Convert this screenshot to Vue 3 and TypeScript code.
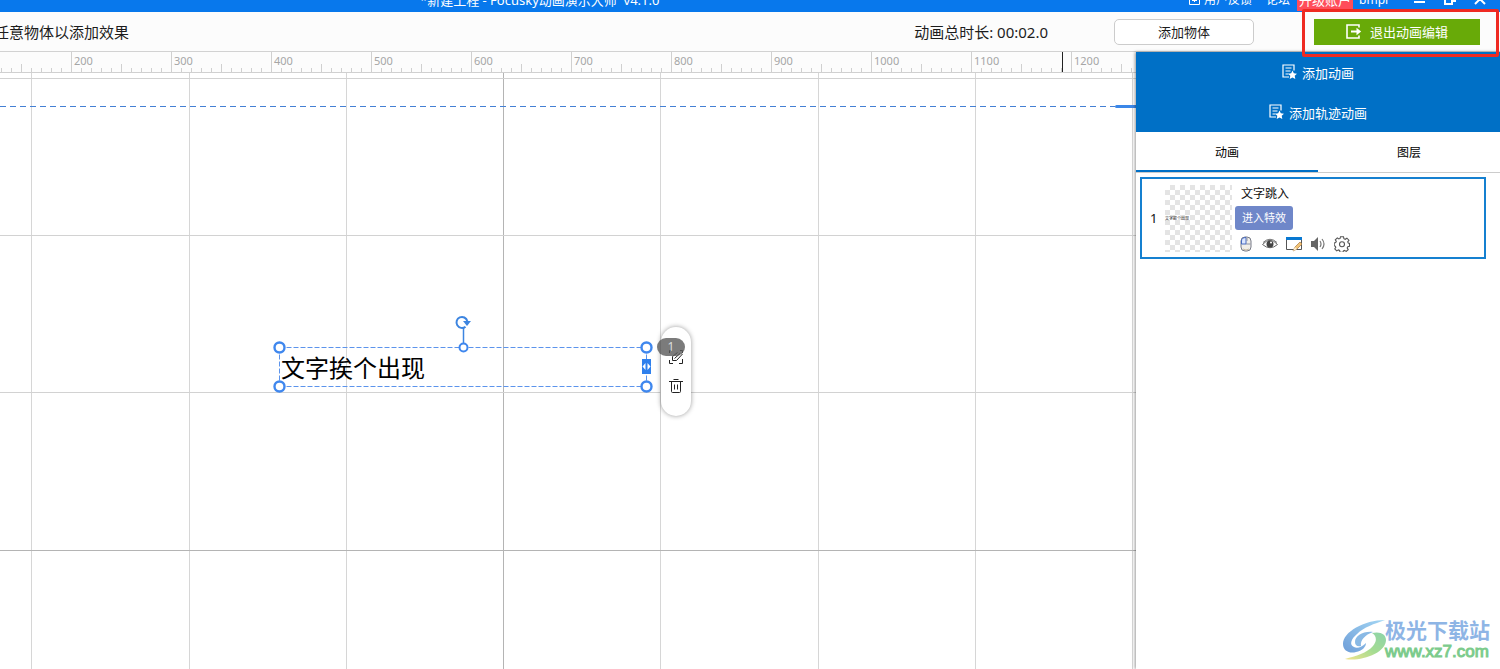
<script setup lang="ts">
import { computed, onBeforeUnmount, onMounted, ref } from 'vue'

const PANEL_WIDTH = 364
const windowWidth = ref(window.innerWidth)
const updateWidth = () => { windowWidth.value = window.innerWidth }
onMounted(() => window.addEventListener('resize', updateWidth))
onBeforeUnmount(() => window.removeEventListener('resize', updateWidth))

const rulerMarks = computed<number[]>(() => {
  const count = Math.floor((windowWidth.value - PANEL_WIDTH - 71) / 100) + 1
  return Array.from({ length: Math.max(count, 0) }, (_, i) => (i + 2) * 100)
})
const columns: number[] = Array.from({ length: 24 }, (_, i) => Math.round(31.4 + i * 157.25))
const rows: number[] = Array.from({ length: 14 }, (_, i) => Math.round(4.9 + i * 157.25))
const activeTab = ref<'animation' | 'layer'>('animation')
</script>

<template>
  <div class="app">
    <header class="titlebar">
      <div class="titlebar-row">
        <span class="title">*新建工程 - Focusky动画演示大师&nbsp; v4.1.0</span>
        <nav class="account">
          <a href="#" class="feedback">
            <svg width="11" height="12" viewBox="0 0 11 12" fill="none" stroke="#fff"><path d="M.5 .5h10v10H.5zM3 6.500h5M5.500 3v5" /></svg>
            用户反馈
          </a>
          <a href="#">论坛</a>
          <a href="#" class="upgrade">升级账户</a>
          <a href="#">bmpr</a>
        </nav>
        <div class="window-buttons">
          <button aria-label="最小化"><svg width="12" height="12" viewBox="0 0 12 12"><path d="M0 7h11v2H0z" fill="#fff" /></svg></button>
          <button aria-label="还原"><svg width="12" height="12" viewBox="0 0 12 12" fill="none" stroke="#fff" stroke-width="2"><path d="M1 4h7v6H1zM4 4V1h7v6H8" /></svg></button>
          <button aria-label="关闭"><svg width="12" height="12" viewBox="0 0 12 12" fill="none" stroke="#fff" stroke-width="2"><path d="M1 0l10 10M11 0L1 10" /></svg></button>
        </div>
      </div>
    </header>

    <div class="toolbar">
      <span class="hint">任意物体以添加效果</span>
      <span class="duration">动画总时长: 00:02.0</span>
      <button class="add-object">添加物体</button>
      <button class="exit">
        <svg width="16" height="15" viewBox="0 0 16 15" fill="none" stroke="#fff" stroke-width="1.600"><path d="M13 3.500V1H1v13h12v-2.500" /><path d="M5 7.500h7" stroke-width="2" /><path d="M10.500 3.800l4.700 3.700-4.700 3.700z" fill="#fff" stroke="none" /></svg>
        退出动画编辑
      </button>
      <div class="callout"></div>
    </div>

    <main class="main">
      <section class="workspace">
        <div class="ruler">
          <div v-for="mark in rulerMarks" :key="mark" class="ruler-cell">{{ mark }}</div>
          <i class="ruler-cursor"></i>
        </div>
        <div class="surface">
          <svg class="grid" width="100%" height="100%">
            <rect v-for="(x, i) in columns" :key="'c' + x" :x="x" y="0" width="1" height="100%" :fill="i === 3 ? '#b4b4b4' : '#d6d6d6'" />
            <rect v-for="(y, i) in rows" :key="'r' + y" x="0" :y="y" width="100%" height="1" :fill="i === 3 ? '#b4b4b4' : '#d2d2d2'" />
          </svg>
          <div class="frame-edge"><i></i></div>

          <div class="text-object">
            文字挨个出现
            <svg class="handles" width="390" height="82" viewBox="0 0 390 82" fill="none">
              <g stroke="#5c94ec" stroke-dasharray="5 2">
                <path d="M11.500 35.500H378.500M11.500 74.500H378.500M11.500 35.500V74.500M378.500 35.500V74.500" />
              </g>
              <path d="M195.500 16v16" stroke="#3d85e0" stroke-width="1.500" />
              <g fill="#fff" stroke="#3f87ee" stroke-width="2.400">
                <circle cx="11.500" cy="35.500" r="5" /><circle cx="378.500" cy="35.500" r="5" />
                <circle cx="11.500" cy="74.500" r="5" /><circle cx="378.500" cy="74.500" r="5" />
                <circle cx="195.500" cy="35.500" r="4" stroke-width="2" />
              </g>
              <path d="M197.500 14.700A5.500 5.500 0 1 1 199.300 9" stroke="#3d85e0" stroke-width="2" />
              <path d="M195 9h8l-4 5z" fill="#3d85e0" />
              <path d="M374 47h9v15h-9z" fill="#2f80ed" />
              <path d="M377.500 51v7l-3-3.500zM379.500 51v7l3-3.500z" fill="#fff" />
            </svg>
          </div>

          <div class="float-bar">
            <button aria-label="编辑">
              <svg width="16" height="16" viewBox="0 0 16 16" fill="none" stroke="#222"><path d="M1.500 4V1.500H4M12 1.500h2.500V4M1.500 11v3.500H5M11 14.500h3.500V10" /><path d="M4.500 11.500v-4l5-4M4.500 11.500h4l6-6.500M6.500 9.500l5.500-5" /></svg>
            </button>
            <button aria-label="删除">
              <svg width="14" height="16" viewBox="0 0 14 16" fill="none" stroke="#222"><path d="M0 3.500h14M4.500 1.500h5M2.500 3.500v10q0 1 1 1h7q1 0 1-1V3.500M5.500 6.500v5M8.500 6.500v5" /></svg>
            </button>
          </div>
          <span class="order-badge">1</span>
        </div>
      </section>

      <aside class="panel">
        <div class="panel-actions">
          <button v-for="label in ['添加动画', '添加轨迹动画']" :key="label">
            <svg width="15" height="16" viewBox="0 0 15 16" fill="none" stroke="#fff" stroke-width="1.200"><path d="M12 6.500V1H1v12h6M3.500 4h6M3.500 7h5M3.500 10h3" /><path d="M10.500 6.500l1.300 2.800 3.200.4-2.300 2.100.6 3.200-2.800-1.600L7.700 15l.6-3.200L6 9.700l3.200-.4z" fill="#fff" stroke="none" /></svg>
            {{ label }}
          </button>
        </div>
        <div class="tabs" role="tablist">
          <button role="tab" :class="{ active: activeTab === 'animation' }" @click="activeTab = 'animation'">动画</button>
          <button role="tab" :class="{ active: activeTab === 'layer' }" @click="activeTab = 'layer'">图层</button>
        </div>
        <article class="card">
          <span class="number">1</span>
          <div class="thumb">文字挨个出现</div>
          <div class="details">
            <span class="name">文字跳入</span>
            <button class="effect">进入特效</button>
            <div class="tools">
              <button aria-label="鼠标触发">
                <svg width="16" height="16" viewBox="0 0 16 16"><rect x="3" y="1" width="10" height="14" rx="4" fill="#f1eee8" stroke="#777b88" /><path d="M8 1.500V8H3.500V5Q3.500 1.500 8 1.500z" fill="#dce7ff" stroke="#4669bf" /><path d="M8 8h4.500M9 2v3" stroke="#8c92a5" /><path d="M5 13q3 2 6 0" fill="none" stroke="#c8bca5" /></svg>
              </button>
              <button aria-label="预览">
                <svg width="16" height="16" viewBox="0 0 16 16" fill="none"><path d="M.5 8.500Q8 0 15.500 8.500 8 15 .5 8.500z" stroke="#666" /><path d="M1 6.500Q8 0 15 6.500" stroke="#777" /><circle cx="8" cy="8" r="3.500" fill="#444" /><circle cx="9" cy="6.500" r="1" fill="#fff" /></svg>
              </button>
              <button aria-label="编辑">
                <svg width="16" height="16" viewBox="0 0 16 16"><path d="M.5 1.500h15v12H.5z" fill="#fff" stroke="#555" /><path d="M0 1h16v3H0z" fill="#0878d1" /><path d="M7 15l2-4 5-5 2 2-5 5z" fill="#f3c475" stroke="#a77843" stroke-width=".7" /><path d="M7 15l2-4 2 2z" fill="#fff0d0" /></svg>
              </button>
              <button aria-label="声音">
                <svg width="16" height="16" viewBox="0 0 16 16"><path d="M1 5h3l4-4v14l-4-4H1z" fill="#666" /><path d="M10 5q2 3 0 6M12 3q4 5 0 10" fill="none" stroke="#777" stroke-width="1.200" /></svg>
              </button>
              <button aria-label="设置">
                <svg width="16" height="16" viewBox="0 0 16 16" fill="none" stroke="#555" stroke-width="1.100"><path d="M6.500 .7h3l.4 2 1.300.6 1.700-1.100 2 2-1.200 1.700.6 1.200 1.200.3v2.800l-1.700.4-.6 1.300 1 1.700-2 1.800-1.700-1-1.100.5-.4 1.300h-3l-.4-1.800-1.200-.5-1.700 1-1.900-2 1-1.600-.6-1.200-1-.3V7l1.500-.4.6-1.200-1-1.600 2-1.900 1.500 1 1.300-.5z" /><circle cx="8" cy="8.300" r="2.500" /></svg>
              </button>
            </div>
          </div>
        </article>
      </aside>
    </main>

    <div class="watermark">
      <svg width="46" height="42" viewBox="0 0 46 42">
        <defs>
          <linearGradient id="swirl-blue" x1="0" y1="1" x2="1" y2="0"><stop stop-color="#4b86cf" /><stop offset="1" stop-color="#8dcdf2" /></linearGradient>
          <linearGradient id="swirl-green" x1="0" y1="1" x2="1" y2="0"><stop stop-color="#f0dd70" /><stop offset=".5" stop-color="#8fd477" /><stop offset="1" stop-color="#70c996" /></linearGradient>
        </defs>
        <path d="M3 40C19 43 44 34 44 21c0-6-6-9-14-7 5 3 5 8 1 13C25 34 14 37 3 40z" fill="url(#swirl-green)" />
        <path d="M43 1C22 1 1 13 1 25c0 7 7 10 13 8 6-1 10-5 10-9-4 4-9 6-12 4-5-2-3-8 3-13C22 8 32 5 43 1z" fill="url(#swirl-blue)" />
        <path d="M31 13c-10-1-18 4-18 10 0 3 2 5 6 4-1-6 4-11 12-14z" fill="#6ca8df" />
      </svg>
      <div class="watermark-text"><b>极光下载站</b><span>www.xz7.com</span></div>
    </div>
  </div>
</template>

<style>
html, body { margin: 0; }
</style>

<style scoped>
.app {
  position: relative;
  display: flex;
  flex-direction: column;
  min-height: 100vh;
  overflow: hidden;
  background: #fff;
  color: #1c1c1c;
  font-family: "Noto Sans", "Noto Sans CJK SC", sans-serif;
  font-size: 13px;
}
* { box-sizing: border-box; }
button { margin: 0; padding: 0; border: 0; background: none; color: inherit; font: inherit; cursor: pointer; }
a { color: inherit; text-decoration: none; }
svg { display: block; flex: none; }

.titlebar { display: flex; align-items: flex-end; height: 12px; overflow: hidden; background: #0878ec; color: #fff; }
.titlebar-row { display: flex; flex: 1; align-items: center; height: 24px; line-height: 22px; white-space: nowrap; }
.title { margin-left: 420px; }
.account { display: flex; gap: 6px; margin-left: auto; font-size: 12px; }
.account a:nth-child(2) { margin: 0 1px 0 8px; }
.feedback { display: flex; align-items: center; gap: 4px; }
.account .upgrade { padding: 0 2px; background: #ff4d5a; font-size: 13px; }
.window-buttons { display: flex; gap: 18px; margin: 0 14px 0 24px; }

.toolbar { position: relative; display: flex; align-items: center; height: 40px; border-bottom: 1px solid #d2d2d2; background: #fcfcfc; }
.hint, .duration { font-size: 15px; white-space: nowrap; }
.hint { margin-left: -6px; }
.duration { margin-left: auto; }
.add-object { width: 140px; height: 26px; margin: 0 60px 0 66px; border: 1px solid #ccc; border-radius: 5px; background: #fff; }
.exit { display: flex; align-items: center; justify-content: center; gap: 8px; width: 166px; height: 26px; margin-right: 20px; background: #68aa08; color: #fff; }
.callout { position: absolute; z-index: 3; top: -3px; right: 1px; width: 197px; height: 48px; border: 3px solid #ef2a22; border-radius: 2px; pointer-events: none; }

.main { display: flex; flex: 1; }
.workspace { display: flex; flex: 1; flex-direction: column; min-width: 0; overflow: hidden; }
.ruler {
  position: relative;
  display: flex;
  height: 21px;
  padding-left: 71px;
  overflow: hidden;
  border-bottom: 1px solid #d0d0d0;
  background:
    linear-gradient(to right, #d0d0d0 1px, transparent 1px) 21px 100% / 50px 8px repeat-x,
    linear-gradient(to right, #d0d0d0 1px, transparent 1px) 1px 100% / 10px 4px repeat-x,
    #fcfcfc;
  color: #a6a6a6;
  font-size: 11px;
  line-height: 18px;
}
.ruler-cell { flex: 0 0 100px; padding-left: 2px; border-left: 1px solid #d0d0d0; }
.ruler-cursor { position: absolute; top: 0; left: 1062px; width: 1px; height: 20px; background: #222; }
.surface { position: relative; flex: 1; overflow: hidden; }
.grid { position: absolute; inset: 0; }
.frame-edge { position: absolute; top: 32px; left: 0; display: flex; align-items: center; width: 100%; height: 3px; }
.frame-edge::before { content: ""; flex: 1; height: 1px; background: repeating-linear-gradient(to right, #4480d4 0 6px, transparent 6px 10px); }
.frame-edge i { width: 21px; height: 3px; border-radius: 2px 0 0 2px; background: #3b87e8; }

.text-object { position: absolute; top: 274px; left: 279px; width: 368px; height: 40px; padding-left: 2px; color: #000; font-size: 24px; line-height: 42px; white-space: nowrap; }
.handles { position: absolute; top: -35px; left: -11px; }
.float-bar { position: absolute; top: 254px; left: 661px; display: flex; flex-direction: column; align-items: center; gap: 13px; width: 30px; height: 89px; padding-top: 22px; border-radius: 15px; background: #fff; box-shadow: 0 0 5px rgba(0, 0, 0, .4); }
.order-badge { position: absolute; top: 265px; left: 657px; width: 28px; height: 18px; border-radius: 9px; background: rgba(90, 90, 90, .8); color: #ddd; font-size: 12px; line-height: 18px; text-align: center; }

.panel { position: relative; flex: 0 0 364px; background: #fff; box-shadow: -1px 0 3px rgba(0, 0, 0, .4); }
.panel-actions { background: #0070c6; color: #fff; }
.panel-actions button { display: flex; align-items: center; justify-content: center; gap: 5px; width: 100%; height: 40px; }
.tabs { display: flex; height: 41px; border-bottom: 1px solid #ccc; color: #000; font-size: 12px; }
.tabs button { flex: 1; height: 40px; padding-top: 2px; border-bottom: 2px solid transparent; }
.tabs .active { border-color: #0070c6; }
.card { display: flex; align-items: center; height: 82px; margin: 4px 14px 0 4px; padding-left: 8px; border: 2px solid #1580d0; color: #111; }
.number { width: 15px; font-size: 13px; }
.thumb { width: 67px; height: 67px; background: repeating-conic-gradient(#e4e4e4 0 25%, #fff 0 50%) 0 0 / 10px 10px; color: #222; font-size: 4px; line-height: 67px; white-space: nowrap; }
.details { display: flex; flex-direction: column; align-items: flex-start; margin-left: 3px; }
.name { padding-left: 6px; font-size: 12px; line-height: 24px; }
.effect { width: 58px; height: 24px; margin-bottom: 6px; border-radius: 3px; background: #6f87c9; color: #fff; font-size: 11px; line-height: 22px; }
.tools { display: flex; gap: 8px; padding: 0 0 2px 3px; }

.watermark { position: absolute; right: 10px; bottom: 7px; display: flex; align-items: center; opacity: .8; pointer-events: none; }
.watermark-text { display: flex; flex-direction: column; margin-left: -3px; }
.watermark b { color: #72a3df; font-size: 21px; line-height: 24px; }
.watermark span { color: #5cbf70; font-family: "Liberation Sans", sans-serif; font-size: 17px; line-height: 20px; -webkit-text-stroke: 1px #5cbf70; }
</style>
